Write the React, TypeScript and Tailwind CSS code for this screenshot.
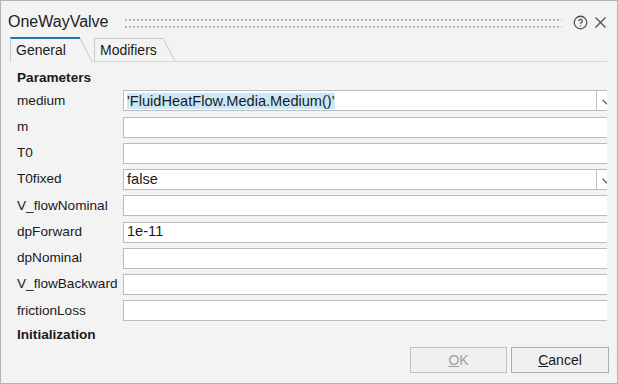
import React from "react";

// Parameter rows of the OneWayValve dialog
type Row = { name: string; value?: string; combo?: boolean; highlight?: boolean };

const rows: Row[] = [
  { name: "medium", value: "'FluidHeatFlow.Media.Medium()'", combo: true, highlight: true },
  { name: "m" },
  { name: "T0" },
  { name: "T0fixed", value: "false", combo: true },
  { name: "V_flowNominal" },
  { name: "dpForward", value: "1e-11" },
  { name: "dpNominal" },
  { name: "V_flowBackward" },
  { name: "frictionLoss" },
];

const HelpIcon = () => (
  <svg width="15" height="15" viewBox="0 0 24 24" fill="none" stroke="#4d4d4d" strokeWidth="2" strokeLinecap="round" strokeLinejoin="round">
    <circle cx="12" cy="12" r="10" />
    <path d="M9.09 9a3 3 0 0 1 5.83 1c0 2-3 3-3 3" />
    <path d="M12 17h.01" />
  </svg>
);

const CloseIcon = () => (
  <svg width="11" height="11" viewBox="0 0 11 11" stroke="#555" strokeWidth="1.4">
    <path d="M0.5 0.5 L10.5 10.5 M10.5 0.5 L0.5 10.5" />
  </svg>
);

const Grip = () => (
  <svg width="100%" height="9">
    <defs>
      <pattern id="grip" width="4" height="7" patternUnits="userSpaceOnUse">
        <rect x="0" y="0" width="1.7" height="1.7" fill="#9a9a9a" />
      </pattern>
    </defs>
    <rect width="100%" height="9" fill="url(#grip)" />
  </svg>
);

const Chevron = () => (
  <svg width="9" height="6" viewBox="0 0 9 6" fill="none" stroke="#666" strokeWidth="1.3">
    <path d="M0.5 0.8 L4.5 4.8 L8.5 0.8" />
  </svg>
);

const Field = ({ row }: { row: Row }) => {
  const text = row.highlight ? (
    <span className="bg-[#cce8f7] leading-[16px]">{row.value}</span>
  ) : (
    row.value
  );

  if (row.combo) {
    return (
      <div className="flex h-[21px] w-[494px] shrink-0 border border-[#bcbcbc] bg-white text-[14.6px]">
        <div className="flex w-[473px] items-center border-r border-[#bcbcbc] pl-[3px] whitespace-nowrap">
          {text}
        </div>
        <div className="flex flex-1 items-center justify-center pt-[3px]">
          <Chevron />
        </div>
      </div>
    );
  }

  return (
    <div className="flex h-[21px] w-[494px] shrink-0 items-center border border-[#bcbcbc] bg-white pl-[3px] text-[14.6px]">
      {text}
    </div>
  );
};

export default function App() {
  return (
    <div className="flex h-[384px] w-[618px] flex-col overflow-hidden border border-[#b4b4b4] bg-[#f3f3f3] font-['Liberation_Sans',Arial,sans-serif] text-[14px] text-[#1a1a1a]">
      {/* title bar */}
      <div className="flex h-[36px] shrink-0 items-center pt-[6px] pl-[7px] pr-[11px]">
        <span className="text-[16px] text-[#202020]">OneWayValve</span>
        <div className="ml-[17px] mr-[11px] mt-[2px] flex-1">
          <Grip />
        </div>
        <HelpIcon />
        <div className="ml-[7px]">
          <CloseIcon />
        </div>
      </div>

      {/* tabs */}
      <div className="flex h-[25px] shrink-0 items-end pl-[9px] pr-[10px]">
        <div className="flex h-[25px]">
          <div className="flex w-[70px] items-center border-l border-t-2 border-l-[#c9c9c9] border-t-[#1f78b0] pl-[5px] pb-[1px]">
            General
          </div>
          <svg width="12" height="25">
            <path d="M0 1 L12 25" stroke="#c9c9c9" strokeWidth="1" />
          </svg>
        </div>
        <div className="flex h-[23px] flex-1 items-end border-b border-[#d6d6d6]">
          <div className="ml-[2px] flex h-[23px]">
            <div className="flex w-[69px] items-center border-l border-t border-[#c9c9c9] pl-[5px]">
              Modifiers
            </div>
            <svg width="12" height="23">
              <path d="M0 0.5 L12 23" stroke="#c9c9c9" strokeWidth="1" />
            </svg>
          </div>
        </div>
      </div>

      {/* parameter list */}
      <div className="flex h-[282px] w-[606px] shrink-0 flex-col overflow-hidden pt-[6px] pl-[16px] text-[13.6px]">
        <div className="mb-[2px] flex h-[22px] items-center font-bold">Parameters</div>
        <div className="flex flex-col gap-[5.25px]">
          {rows.map((row) => (
            <div key={row.name} className="flex items-center">
              <div className="w-[106px] shrink-0 whitespace-nowrap">{row.name}</div>
              <Field row={row} />
            </div>
          ))}
        </div>
        <div className="mt-[4px] flex h-[22px] items-center font-bold">Initialization</div>
      </div>

      {/* buttons */}
      <div className="flex flex-1 items-start justify-end gap-[4px] pt-[3px] pr-[8px]">
        <button className="h-[26px] w-[97px] border border-[#c2c2c2] bg-[#f0f0f0] text-[#a0a0a0]">
          <span className="underline">O</span>K
        </button>
        <button className="h-[26px] w-[98px] border border-[#adadad] bg-[#f0f0f0] text-[#1a1a1a]">
          <span className="underline">C</span>ancel
        </button>
      </div>
    </div>
  );
}
